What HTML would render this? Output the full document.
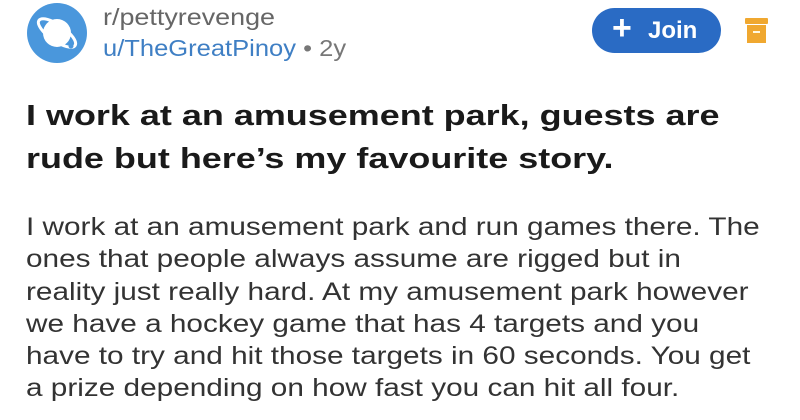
<!DOCTYPE html><html><head><style>
body{margin:0;width:800px;height:420px;background:#fff;overflow:hidden;font-family:"Liberation Sans",sans-serif;position:relative}
.a{position:absolute;transform-origin:0 0;white-space:nowrap}
</style></head><body>
<svg class="a" style="left:26px;top:2px" width="62" height="62" viewBox="0 0 62 62">
<circle cx="31" cy="31" r="30" fill="#4a97dc"/>
<circle cx="31" cy="31" r="14" fill="#fff"/>
<ellipse cx="31" cy="31" rx="22" ry="8" transform="rotate(35 31 31)" fill="none" stroke="#fff" stroke-width="3"/>
<circle cx="45" cy="44" r="2.5" fill="#4a97dc"/>
</svg>
<div class="a" style="left:103px;top:4px;font-size:23px;color:#666;transform:scaleX(1.17)">r/pettyrevenge</div>
<div class="a" style="left:103px;top:35px;font-size:23px;color:#3f7fc4;transform:scaleX(1.11)">u/TheGreatPinoy <span style="color:#777">• 2y</span></div>
<div class="a" style="left:592px;top:8px;width:129px;height:45px;border-radius:23px;background:#2a6bc4;color:#fff;font-weight:bold;font-size:24px;line-height:45px"><span style="position:absolute;left:20px;font-size:34px;top:-2px">+</span><span style="position:absolute;left:56px">Join</span></div>
<div class="a" style="left:745px;top:18px;width:23px;height:6px;background:#f0a830;border-radius:1px"></div>
<div class="a" style="left:747px;top:25px;width:19px;height:18px;background:#f0a830"></div>
<div class="a" style="left:753px;top:31px;width:7px;height:2px;background:#fff8e0"></div>
<div class="a" style="left:26px;top:95px;font-size:29px;font-weight:bold;color:#1a1a1a;line-height:43px;transform:scaleX(1.24)">I work at an amusement park, guests are<br>rude but here’s my favourite story.</div>
<div class="a" style="left:26px;top:211px;font-size:25px;color:#333;line-height:32.3px;transform:scaleX(1.19)">I work at an amusement park and run games there. The<br>ones that people always assume are rigged but in<br>reality just really hard. At my amusement park however<br>we have a hockey game that has 4 targets and you<br>have to try and hit those targets in 60 seconds. You get<br>a prize depending on how fast you can hit all four.</div>
</body></html>
